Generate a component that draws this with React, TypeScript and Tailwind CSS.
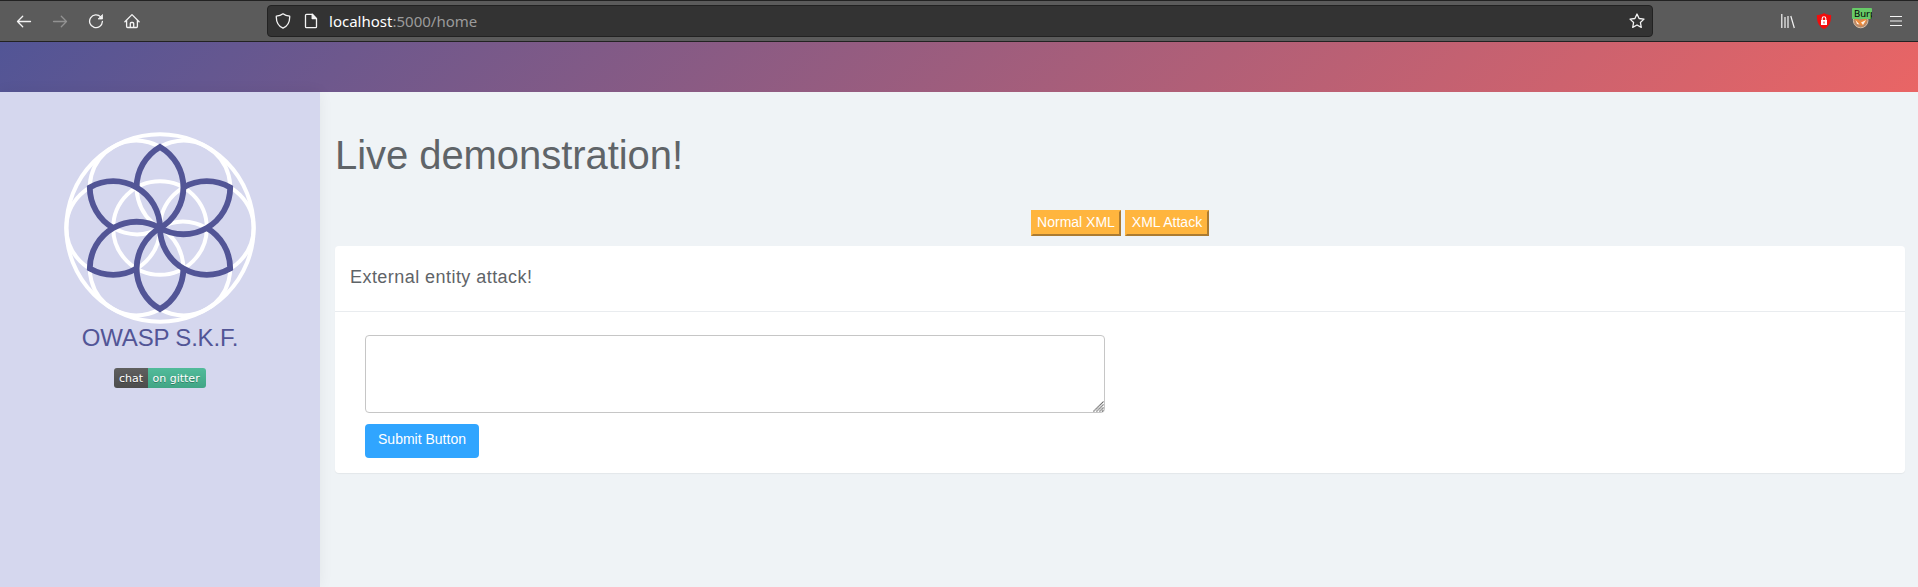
import React from "react";

const R = 46.8;
const HEX = [0, 60, 120, 180, 240, 300];

function ToolbarIcon({ children, className = "" }: { children: React.ReactNode; className?: string }) {
  return (
    <svg viewBox="0 0 16 16" className={`h-4 w-4 shrink-0 ${className}`} fill="none" stroke="currentColor" strokeWidth="1.3" strokeLinecap="round" strokeLinejoin="round">
      {children}
    </svg>
  );
}

function Toolbar() {
  return (
    <div className="flex h-[42px] shrink-0 items-center border-y border-[#222222] bg-[#5b5b5b] text-[#f4f4f4]">
      <div className="flex w-[267px] items-center gap-5 pl-4">
        <ToolbarIcon><path d="M14.500 8.500H1.500M6.700 3.300 1.500 8.500l5.200 5.200" /></ToolbarIcon>
        <ToolbarIcon className="text-[#929292]"><path d="M1.500 8.500h13M9.300 3.300l5.200 5.200-5.200 5.200" /></ToolbarIcon>
        <ToolbarIcon>
          <path d="M12.700 3.900A6.400 6.400 0 1 0 14.400 8.500" />
          <path d="M14.500 1.900v4.100h-4.100z" fill="currentColor" strokeWidth="0.8" />
        </ToolbarIcon>
        <ToolbarIcon>
          <path d="M.9 8.700 8 1.600l7.100 7.100M2.600 7.200v6.300a1 1 0 0 0 1 1h8.800a1 1 0 0 0 1-1V7.200M6.300 14.300v-3.800a1 1 0 0 1 1-1h1.400a1 1 0 0 1 1 1v3.800" />
        </ToolbarIcon>
      </div>
      <div className="flex h-8 w-[1386px] items-center rounded border border-[#222222] bg-[#333333] pl-[7px] pr-[7px]">
        <ToolbarIcon><path d="M8 .8C6 2.500 3.600 3.100 1.300 3.200c-.2 5.100 1.700 9.700 6.700 12 5-2.300 6.900-6.900 6.700-12C12.400 3.100 10 2.500 8 .8z" /></ToolbarIcon>
        <ToolbarIcon className="ml-3">
          <path d="M3.500 1.300h5.700l4.300 4.300v8.100a1 1 0 0 1-1 1h-9a1 1 0 0 1-1-1V2.300a1 1 0 0 1 1-1z" />
          <path d="M9.200 1.300v4.300h4.300z" fill="currentColor" />
        </ToolbarIcon>
        <span className="ml-2.5 font-['Noto_Sans',sans-serif] text-[15px] leading-none tracking-[0.01px] text-[#9b9b9b]">
          <span className="text-white">localhost</span>:5000/home
        </span>
        <ToolbarIcon className="ml-auto"><path d="m8 1 2.100 4.500 4.900.6-3.600 3.400.9 4.900L8 12l-4.300 2.400.9-4.900L1 6.100l4.900-.6z" /></ToolbarIcon>
      </div>
      <div className="ml-auto flex items-center pr-4">
        <svg viewBox="0 0 14 16" className="h-4 w-3.5" stroke="currentColor" strokeWidth="1.200" fill="none"><path d="M.8 1v14M4 4v11M7 3v12M9.800 3l3.500 12" /></svg>
        <svg viewBox="0 0 16 16" className="ml-[21px] h-4 w-4">
          <path d="M8 0C6 1.500 3 2 .9 2c-.2 6 1.400 11.500 7.100 14 5.700-2.500 7.300-8 7.100-14C13 2 10 1.500 8 0z" fill="#f20d0d" />
          <path d="M6.200 7.200V5.600a1.800 1.800 0 0 1 3.600 0v1.600" fill="none" stroke="white" strokeWidth="1.100" />
          <rect x="5" y="7" width="6" height="5" fill="white" />
          <path d="M8 8.500v2" stroke="#f20d0d" />
        </svg>
        <div className="relative ml-5 h-[26px] w-5 overflow-hidden">
          <svg viewBox="0 0 20 26" className="h-[26px] w-5">
            <circle cx="8.700" cy="12.500" r="7.300" fill="#ba8866" stroke="#d6bfa8" strokeWidth="1" />
            <path d="M3 10l5 3 6-3 .5 4-4.500 4-6-3z" fill="#ed8938" />
            <path d="M3.500 12l4 4.500-2.500-.5zM9 14.500l5-2.500-3 5z" fill="#fff3e7" />
          </svg>
          <span className="absolute left-0 top-0 h-[11px] w-5 overflow-hidden rounded-[1px] bg-[#67ca67] pl-0.5 font-['Noto_Sans',sans-serif] text-[9.500px] leading-[11px] text-black">Burp</span>
        </div>
        <svg viewBox="0 0 12 12" className="ml-[18px] h-3 w-3" stroke="currentColor" strokeWidth="1.200"><path d="M0 1.500h12M0 6h12M0 10.500h12" /></svg>
      </div>
    </div>
  );
}

function Logo() {
  return (
    <svg viewBox="-96 -96 192 192" className="h-48 w-48" fill="none">
      <g stroke="white" strokeWidth="4">
        <circle r="93.700" />
        <circle r={R} />
        {HEX.map((a) => <circle key={a} cx={R} r={R} transform={`rotate(${a})`} />)}
      </g>
      <g stroke="#525596" strokeWidth="5.800" strokeLinejoin="miter">
        {HEX.map((a) => (
          <path key={a} d="M-23.400-40.530A46.800 46.800 0 0 1 0-81.060A46.800 46.800 0 0 1 0 0" transform={`rotate(${a})`} />
        ))}
      </g>
    </svg>
  );
}

function Sidebar() {
  return (
    <aside className="z-10 flex w-80 shrink-0 flex-col items-center bg-[#d5d7ee] pt-10 shadow-[0_0_14px_rgba(0,0,0,0.06)]">
      <Logo />
      <div className="-mt-px text-[24px] leading-[29px] tracking-[-0.2px] text-[#525596]">OWASP S.K.F.</div>
      <div className="mt-4 flex h-5 overflow-hidden rounded-[3px] font-['DejaVu_Sans',sans-serif] text-[11px] leading-[21px] text-white [text-shadow:0_1px_0_rgba(1,1,1,0.3)]">
        <span className="w-[34px] bg-linear-to-b from-[#5f5f5f] to-[#4c4c4c] text-center">chat</span>
        <span className="w-[58px] bg-linear-to-b from-[#51bb9a] to-[#41a585] pl-[4.500px]">on gitter</span>
      </div>
    </aside>
  );
}

const orangeButton = "h-[26px] border-2 border-t-[#ffb53e] border-l-[#ffb53e] border-r-[#ab7b31] border-b-[#ab7b31] bg-[#ffb53e] pb-0.5 text-[14px] leading-5 text-white";

function Content() {
  return (
    <main className="flex min-w-0 flex-1 flex-col bg-[#eff3f6] pl-[15px] pr-[13px] text-[#5f6468]">
      <h1 className="mt-10 h-[46px] text-[40px] leading-[46px] tracking-[-0.06px]">Live demonstration!</h1>
      <div className="mt-8 flex justify-center gap-1">
        <button className={`w-[90px] ${orangeButton}`}>Normal XML</button>
        <button className={`w-[84px] ${orangeButton}`}>XML Attack</button>
      </div>
      <section className="mt-2.5 h-[227px] rounded bg-white shadow-[0_1px_1px_rgba(0,0,0,0.05)]">
        <div className="flex h-[66px] items-center border-b border-[#e9ecef] px-[15px] text-[18px] tracking-[0.45px]">
          <h2 className="-mt-0.5">External entity attack!</h2>
        </div>
        <div className="flex flex-col items-start px-[30px] pt-[23px]">
          <div className="relative h-[78px] w-[740px]">
            <textarea aria-label="XML" className="block h-full w-full resize-none rounded border border-[#c6c6c6] bg-white p-2 outline-none" />
            <svg viewBox="0 0 11 11" className="pointer-events-none absolute bottom-px right-px h-[11px] w-[11px]" stroke="#666666" strokeWidth="1.200" strokeDasharray="1.200 .3">
              <path d="M.5 10.500l10-10M3.500 10.500l7-7M6.500 10.500l4-4M9 10.500l1.500-1.500" />
            </svg>
          </div>
          <button className="mt-[11px] h-[34px] w-[114px] rounded bg-[#30a5ff] pb-1 text-[14px] leading-5 text-white">Submit Button</button>
        </div>
      </section>
    </main>
  );
}

export default function App() {
  return (
    <div className="flex h-screen flex-col overflow-hidden font-['Liberation_Sans',Arial,sans-serif]">
      <Toolbar />
      <header className="h-[50px] shrink-0 bg-linear-[135deg] from-[#525596] to-[#e96565]" />
      <div className="flex min-h-0 flex-1">
        <Sidebar />
        <Content />
      </div>
    </div>
  );
}
